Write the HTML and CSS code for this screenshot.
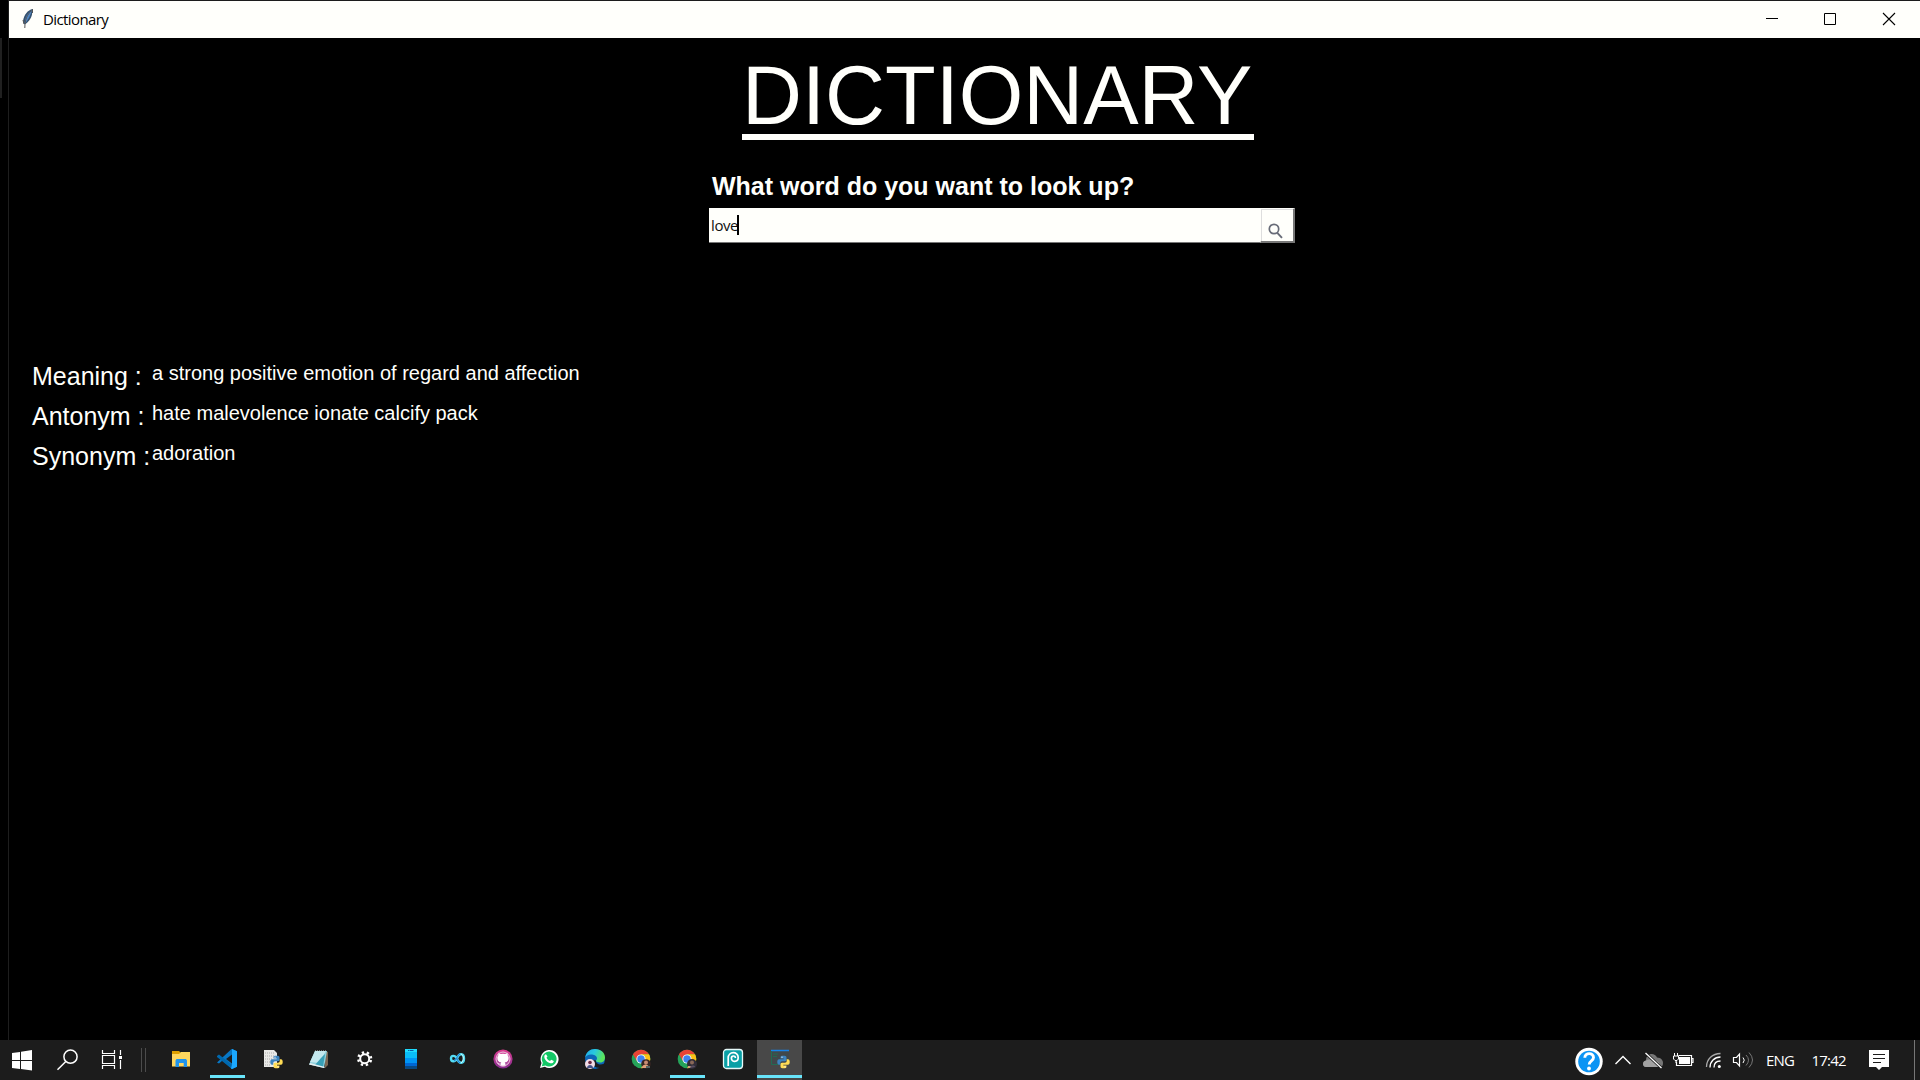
FILE: index.html
```html
<!DOCTYPE html>
<html lang="en">
<head>
<meta charset="utf-8">
<title>Dictionary</title>
<link rel="stylesheet" href="styles.css">
</head>
<body>
<div class="screen">
  <div class="desktop">
    <div class="edge"><div class="edge-tab"></div></div>
    <div class="window">
      <header class="titlebar">
        <svg class="feather" width="12" height="20" viewBox="0 0 12 20"><path d="M10.5 0C6 1 2 6 1.200 11c-.2 2 0 3 1.300 4.500C6 14 9.500 9 10 5.500Z" fill="#34516f"/><path d="M10 1C5.500 4 3 8 2.500 15c4-4 6-9 7.500-14Z" fill="#4f87c4"/><path d="M9.500 1.500C5 6 3 10 2.800 19M10.500 0v4M1 11l1 4" stroke="#555" fill="none"/></svg>
        <span class="window-title">Dictionary</span>
        <div class="controls">
          <svg width="59" height="37"><path d="M23 17.500h12" stroke="#000"/></svg>
          <svg width="59" height="37"><path d="M22.500 12.500h11v11h-11z" stroke="#000" fill="none"/></svg>
          <svg width="59" height="37"><path d="M22 12l12 12M34 12l-12 12" stroke="#000" stroke-width="1.100"/></svg>
        </div>
      </header>
      <main class="content">
        <h1 class="heading">DICTIONARY</h1>
        <div class="lookup">
          <label class="question">What word do you want to look up?</label>
          <div class="search">
            <div class="field"><span>love</span><i class="caret"></i></div>
            <button class="search-button" aria-label="Search"><svg width="16" height="16" viewBox="0 0 16 16"><circle cx="6" cy="6" r="4.700" fill="none" stroke="#686c78" stroke-width="1.700"/><path d="M9.300 9.800l4.700 5" stroke="#686c78" stroke-width="1.900"/></svg></button>
          </div>
        </div>
        <dl class="results">
          <dt>Meaning :</dt><dd>a strong positive emotion of regard and affection</dd>
          <dt>Antonym :</dt><dd>hate malevolence ionate calcify pack</dd>
          <dt>Synonym :</dt><dd>adoration</dd>
        </dl>
      </main>
    </div>
  </div>
  <footer class="taskbar">
    <div class="slot system"><svg width="24" height="24" viewBox="0 0 24 24"><path d="M1 5l8-1v8H1zM10 3.800L21 2v10H10zM1 13h8v8l-8-1zM10 13h11v9.500L10 21z" fill="#fff"/></svg></div>
    <div class="slot system"><svg width="24" height="24" viewBox="0 0 24 24"><circle cx="14.500" cy="8.700" r="6.600" fill="none" stroke="#fff" stroke-width="1.500"/><path d="M9.800 13.500L1.500 21.800" stroke="#fff" stroke-width="1.500"/></svg></div>
    <div class="slot system"><svg width="24" height="24" viewBox="0 0 24 24"><path d="M1.500 2v3.500h12V2M1.500 7.500h12v8h-12zM1.500 21v-3.500h12V21M19.500 2v5M19.500 12v9" fill="none" stroke="#fff" stroke-width="1.200"/><path d="M18 8h3v3h-3z" fill="#fff"/></svg></div>
    <div class="divider"></div>
    <div class="slot"><svg width="24" height="24" viewBox="0 0 24 24"><path d="M3 3h7l2 2-2 3H3z" fill="#dfa000"/><path d="M3 6h7l2-2h9v14.500H3z" fill="#ffd75e"/><path d="M6.500 19v-6.500l1-1.500h9.500l1 1.500V19h-3.300v-4H10v4z" fill="#2094ec"/></svg></div>
    <div class="slot"><svg width="24" height="24" viewBox="0 0 24 24"><path d="M17 1l5 2.300v15.400L17 21 7.500 12.500 4 15.500l-2-1 14-13Z" fill="#0877c5"/><path d="M2 8l2-1.500 13 10.300V21L2 9Z" fill="#0068ae"/><path d="M17 1l5 2.300v15.400L17 21l-1-.5 1-4V6z" fill="#1ba8ff"/><path d="M17 6.500v9L11 11z" fill="#1c1c1c"/></svg><b class="running"></b></div>
    <div class="slot"><svg width="24" height="24" viewBox="0 0 24 24"><path d="M3 2h10l3 3v14H3z" fill="#e8e8e6"/><path d="M4 5h10M4 8h9M4 11h7M4 14h6M4 17h6" stroke="#aaa" stroke-dasharray="1 1"/><use href="#python" x="9" y="7.500" width="13" height="13"/></svg></div>
    <div class="slot"><svg width="24" height="24" viewBox="0 0 24 24"><path d="M18 3l3 1v13l-3 3z" fill="#7c6652"/><path d="M8 3h12l-3 17L2 16.500z" fill="#8fd0dc"/><path d="M8 3h11l-7 12-9-1z" fill="#c4e8ee"/><path d="M14 10l4-4-2 13-8-2z" fill="#389fb6"/><path d="M2 16.500L17 20l1-1-15-4z" fill="#e9eeee"/><path d="M8 2.500h12" stroke="#777" stroke-dasharray="1 1"/></svg></div>
    <div class="slot"><svg width="24" height="24" viewBox="0 0 24 24"><circle cx="11.700" cy="10.700" r="4.500" fill="none" stroke="#fff" stroke-width="2"/><circle cx="11.700" cy="10.700" r="6.300" fill="none" stroke="#fff" stroke-width="2.600" stroke-dasharray="2.300 2.648" stroke-dashoffset="-1.300"/></svg></div>
    <div class="slot"><svg width="24" height="24" viewBox="0 0 24 24"><path d="M6 1h12v20H6z" fill="#0abdf8"/><path d="M6 1h12v3H6z" fill="#20dcff"/><path d="M9 2.500h6" stroke="#075ba5" stroke-dasharray="1 .5 4"/><path d="M6 10h12v5H6z" fill="#0095f5"/><path d="M6 15h12v3H6z" fill="#0067d4"/><path d="M6 18h12v3H6z" fill="#084983"/></svg></div>
    <div class="slot"><svg width="24" height="24" viewBox="0 0 24 24"><path d="M12 10.500C10 7 6 7 6 10.500s4 4 6 0c2-6 7-5.500 7 0s-5 6-7 0" fill="none" stroke="#55ddf5" stroke-width="2.400"/><path d="M9 13c3-1 3-6 6-7M12 10.500c1 3 2 4 3 4.500" stroke="#2484d7" stroke-width="1.200" fill="none"/><path d="M16 6c3 1 3 7 0 9" stroke="#d2ffff" fill="none"/></svg></div>
    <div class="slot"><svg width="24" height="24" viewBox="0 0 24 24"><defs><linearGradient id="pink" x2="0" y2="1"><stop stop-color="#df3d91"/><stop offset="1" stop-color="#842b8e"/></linearGradient></defs><circle cx="12" cy="11" r="9.600" fill="url(#pink)"/><path d="M9.700 18v-3.700c-3.500-.5-4.200-3-4-5.300 0-1 .4-1.700 1-2.300-.2-1-.1-1.800.2-2.600 1 0 2 .5 2.700 1 1.500-.4 3.300-.4 4.800 0 .8-.5 1.700-1 2.700-1 .3.800.4 1.600.2 2.600.6.600 1 1.300 1 2.300.2 2.300-.5 4.800-4 5.300V18c3-1 5-3.600 5-7a7.300 7.300 0 1 0-9.600 7z" fill="#fff" fill-opacity=".15"/><path d="M9.600 18.300v-2c-2 .3-2.600-.5-3.200-1.500 1.200 0 1.500 1.300 3.200 1 .1-.7.400-1 .7-1.300-3-.4-4-2-4-4.500 0-1 .4-2 1-2.500-.2-1-.1-1.900.2-2.500 1 .1 1.900.6 2.500 1 1.300-.3 2.700-.3 4 0 .6-.4 1.500-.9 2.500-1 .3.600.4 1.500.2 2.500.6.500 1 1.500 1 2.500 0 2.500-1 4.100-4 4.500.5.400.8 1 .8 1.700v2.100z" fill="#fff"/><circle cx="12" cy="11" r="7" fill="none" stroke="#efc0df" stroke-width="1"/></svg></div>
    <div class="slot"><svg width="24" height="24" viewBox="0 0 24 24"><path d="M3 20l1.500-5a9 9 0 1 1 3.400 3.700z" fill="#fff"/><path d="M4.800 18.300l1-3.600a7.400 7.400 0 1 1 2.700 2.700z" fill="#13c866"/><path d="M9 6.200l1.500 2.300-1 1.300c.8 1.600 1.800 2.500 3.500 3.200l1.200-1.300 2.600 1.300c-.2 1.700-1.700 2.600-3.400 2.200C10 14.300 7 11 7.300 8.200 7.500 7 8 6.400 9 6.200z" fill="#fff"/></svg></div>
    <div class="slot"><svg width="24" height="24" viewBox="0 0 24 24"><defs><linearGradient id="sea" x1="0" x2="1" y1="0" y2=".3"><stop stop-color="#20a8e8"/><stop offset=".5" stop-color="#28c9df"/><stop offset="1" stop-color="#5be55b"/></linearGradient></defs><circle cx="12" cy="11" r="10" fill="#0c67b8"/><path d="M2 10C3 4 7 1 12 1c6 0 10 4 10 8.500 0 3-2 5-5 5-2 0-4-.5-4-1.700 0-1 1-1 1-2.500C14 8 11 6.500 8 6.500c-3 0-5 1.500-6 3.500z" fill="url(#sea)"/><path d="M13 12.500c-.5 2 2 4 4.500 4s4-1 4-1-1.500 3-4.500 4.500C12 20 8 17 9 12z" fill="#1c1c1c"/><circle cx="7" cy="16" r="5" fill="#f1dce6"/><circle cx="7" cy="14.500" r="1.800" fill="#6b2740"/><path d="M4 20c0-4 6-4 6 0z" fill="#465386"/></svg></div>
    <div class="slot"><svg width="24" height="24" viewBox="0 0 24 24"><use href="#chrome"/><circle cx="17" cy="16" r="4.800" fill="#382724"/><circle cx="17" cy="14.500" r="2" fill="#c78c73"/><path d="M12.500 20c2-5 7-4 8 0z" fill="#e0a07a"/><path d="M17 18h4v2h-4z" fill="#566"/></svg></div>
    <div class="slot"><svg width="24" height="24" viewBox="0 0 24 24"><use href="#chrome"/><circle cx="17" cy="16" r="5" fill="#302d38"/><circle cx="17" cy="14.500" r="2" fill="#8a6858"/><path d="M13 18h3v2h-3z" fill="#d9a17c"/><path d="M15 20c0-3 5-3 5-1z" fill="#595063"/></svg><b class="running"></b></div>
    <div class="slot"><svg width="24" height="24" viewBox="0 0 24 24"><rect x="2.500" y="1.500" width="19" height="19" rx="3" fill="#0aa0a6" stroke="#e7fafa" stroke-width="1.300"/><path d="M7.200 18V10c0-7 10-7 10-.5 0 5-6.800 5-6.800.8 0-3 4-3 4-.3" fill="none" stroke="#fff" stroke-width="1.700"/></svg></div>
    <div class="slot active"><svg width="24" height="24" viewBox="0 0 24 24"><path d="M3 2h18v15H3z" fill="#41484b"/><path d="M3 2.500h18" stroke="#1683e8" stroke-width="1.500"/><path d="M3.500 3v13.500H10M5 6h5M5 8.500h4" fill="none" stroke="#226b52"/><use href="#python" x="9" y="7.500" width="13" height="13"/></svg><b class="running"></b></div>
    <div class="tray">
      <svg width="350" height="40" viewBox="1570 1040 350 40" class="tray-icons">
        <circle cx="1589" cy="1061.500" r="13.700" fill="#fff"/><circle cx="1589" cy="1061.500" r="10.800" fill="#0b94f4"/><path d="M1584.800 1057.800c.2-5.500 8.700-5.500 8.700-.3 0 3.500-4.300 3.200-4.300 7" fill="none" stroke="#fff" stroke-width="2.900"/><circle cx="1589" cy="1068.500" r="1.900" fill="#fff"/>
        <path d="M1615.500 1064l7.500-7.500 7.500 7.500" fill="none" stroke="#fff" stroke-width="1.400"/>
        <path d="M1646 1067c-4 0-4-6 0-6.500 0-8 9-8 11-3 4 0 6 3 6 5.500s-1 4-3 4z" fill="#777"/><path d="M1646 1060.500c3-2 6-1 7 1 3-2 7 0 7 5.500h-14c-4 0-4-6 0-6.500z" fill="#a2a2a2"/><path d="M1645.500 1053l16 15" stroke="#1c1c1c" stroke-width="3"/><path d="M1645.500 1053l16 15" stroke="#fff" stroke-width="1.300"/>
        <path d="M1678.500 1055.500h13v10h-15v-4M1691.500 1058.500h1.500v4h-1.500" fill="none" stroke="#fff" stroke-width="1.200"/><path d="M1679 1057h11v7h-11z" fill="#fff"/><path d="M1673.500 1056h5v3l-1.500 1.500h-2l-1.500-1.500zM1674.500 1053v3M1677.500 1053v3M1676 1060v3" fill="none" stroke="#fff"/>
        <path d="M1706.500 1067c0-8 6-13.500 14-13.500" fill="none" stroke="#a9a9a9" stroke-width="1.300"/><path d="M1710 1067.500c0-6 4.500-10.500 10.500-10.500M1714 1067.500c0-4 2.500-6.500 6.500-6.500" fill="none" stroke="#fff" stroke-width="1.300"/><circle cx="1719.300" cy="1066.500" r="1.500" fill="#fff"/>
        <path d="M1733.500 1057.500h3l3-3.500v12l-3-3.500h-3z" fill="none" stroke="#fff" stroke-width="1.200"/><path d="M1743 1057.500q2.500 2.500 0 5.500" fill="none" stroke="#fff"/><path d="M1746 1055q5 5 0 10.500M1749 1052.500q7 7.500 0 15" fill="none" stroke="#777"/>
        <path d="M1869 1050h20v17h-7l-3 3-3-3h-7z" fill="#fff"/><path d="M1873 1054.500h12M1873 1058.500h12M1873 1062.500h8" stroke="#1c1c1c"/>
        <path d="M1914.500 1040v40" stroke="#777"/>
        <text class="tray-text" x="1766" y="1066" textLength="29">ENG</text>
        <text class="tray-text" x="1811.500" y="1066" textLength="35">17:42</text>
      </svg>
    </div>
  </footer>
</div>
<svg class="symbols" width="0" height="0">
  <symbol id="python" viewBox="0 0 13 13"><path d="M6.300 0C3.500 0 3.500 1 3.500 3h3.200v.7H2C-.3 3.700-.3 9.300 2 9.300h1.300V7.500c0-1 .8-1.700 1.700-1.700h3c1 0 1.500-.8 1.500-1.500V2C9.500.5 8 0 6.300 0z" fill="#3c83bf"/><path d="M6.700 13c2.800 0 2.800-1 2.800-3H6.300v-.7H11c2.300 0 2.300-5.600 0-5.600H9.700v1.800c0 1-.8 1.700-1.700 1.700H5c-1 0-1.500.8-1.500 1.500V11c0 1.500 1.500 2 3.200 2z" fill="#ffdc55"/><circle cx="5" cy="1.700" r=".6" fill="#fff"/><circle cx="8" cy="11.300" r=".6" fill="#fff"/></symbol>
  <symbol id="chrome" viewBox="0 0 24 24" width="24" height="24"><circle cx="12" cy="11" r="9.300" fill="#25a35a"/><path d="M3.950 6.350A9.300 9.300 0 0 1 20.050 6.350H12L8 13.300z" fill="#e94335"/><path d="M20.050 6.350A9.300 9.300 0 0 1 12 20.300L16 13.300 12 6.350z" fill="#fbc116"/><circle cx="12" cy="11" r="4.600" fill="#fff"/><circle cx="12" cy="11" r="3.700" fill="#3f82ef"/></symbol>
</svg>
</body>
</html>
```
FILE: styles.css
```css
* { box-sizing: border-box; }
body { margin: 0; background: #000; overflow: hidden; font-family: "Liberation Sans", Arial, sans-serif; }
.screen { width: 1920px; height: 1080px; display: flex; flex-direction: column; }
.desktop { flex: 1; display: flex; min-height: 0; }
.edge { width: 8px; padding-top: 38px; }
.edge-tab { width: 2px; height: 60px; background: #202020; }
.window { flex: 1; border-left: 1px solid #1e1e1e; border-top: 1px solid #1c1c1c; }
.titlebar { height: 37px; display: flex; background: #fffffb; color: #000; }
.feather { margin: 8px 0 0 13px; }
.window-title { margin-left: 9px; font: 15px/37px "Open Sans", "Noto Sans", sans-serif; letter-spacing: -0.6px; }
.controls { margin-left: auto; display: flex; }
.titlebar svg { display: block; }
.content { color: #fffffb; }
.heading { margin: 13px 0 0 733px; width: 512px; height: 89px; border-bottom: 6px solid #fffffb; font-size: 83px; font-weight: 400; line-height: 90px; white-space: nowrap; }
.lookup { margin: 32px 0 0 700px; width: 586px; }
.question { display: block; height: 36px; padding-left: 3px; font-size: 25px; font-weight: 700; line-height: 28px; white-space: nowrap; }
.search { display: flex; height: 35px; }
.field { width: 551px; height: 35px; padding: 7px 0 0 2px; background: #fffffb; color: #111; border-bottom: 1px solid #777; display: flex; font: 15px/20px "Open Sans", "Noto Sans", sans-serif; letter-spacing: -0.4px; }
.caret { width: 2px; height: 20px; background: #000; margin-left: -1px; }
.search-button { width: 35px; height: 35px; padding: 11px 0 0 7px; border: 1px solid; border-color: #fffffb #777 #777 #fffffb; border-right-width: 2px; border-bottom-width: 2px; background: #fffffb; box-shadow: inset 1px 1px #dedede; text-align: left; }
.search-button svg { display: block; }
.results { margin: 117px 0 0 23px; display: grid; grid-template-columns: 120px 1fr; grid-auto-rows: 40px; white-space: nowrap; }
.results dt { font-size: 25px; line-height: 32px; }
.results dd { margin: 0; font-size: 20px; line-height: 27px; }
.taskbar { height: 40px; background: #1c1c1c; display: flex; }
.slot { width: 46px; height: 40px; display: flex; align-items: center; justify-content: center; position: relative; }
.system { width: 45px; }
.divider { width: 5px; height: 24px; margin: 8px 12px 0 6px; border: solid #4c4c4c; border-width: 0 1px; }
.running { position: absolute; left: 6px; right: 5px; bottom: 2px; height: 3px; background: #68e5fb; }
.active { background: #484848; width: 45px; margin-left: 1px; }
.active .running { left: 0; right: 0; }
.tray { margin-left: auto; height: 40px; }
.tray-icons { display: block; }
.tray-text { font: 15px "Open Sans", "Noto Sans", sans-serif; fill: #fff; }
.symbols { display: block; }
```
